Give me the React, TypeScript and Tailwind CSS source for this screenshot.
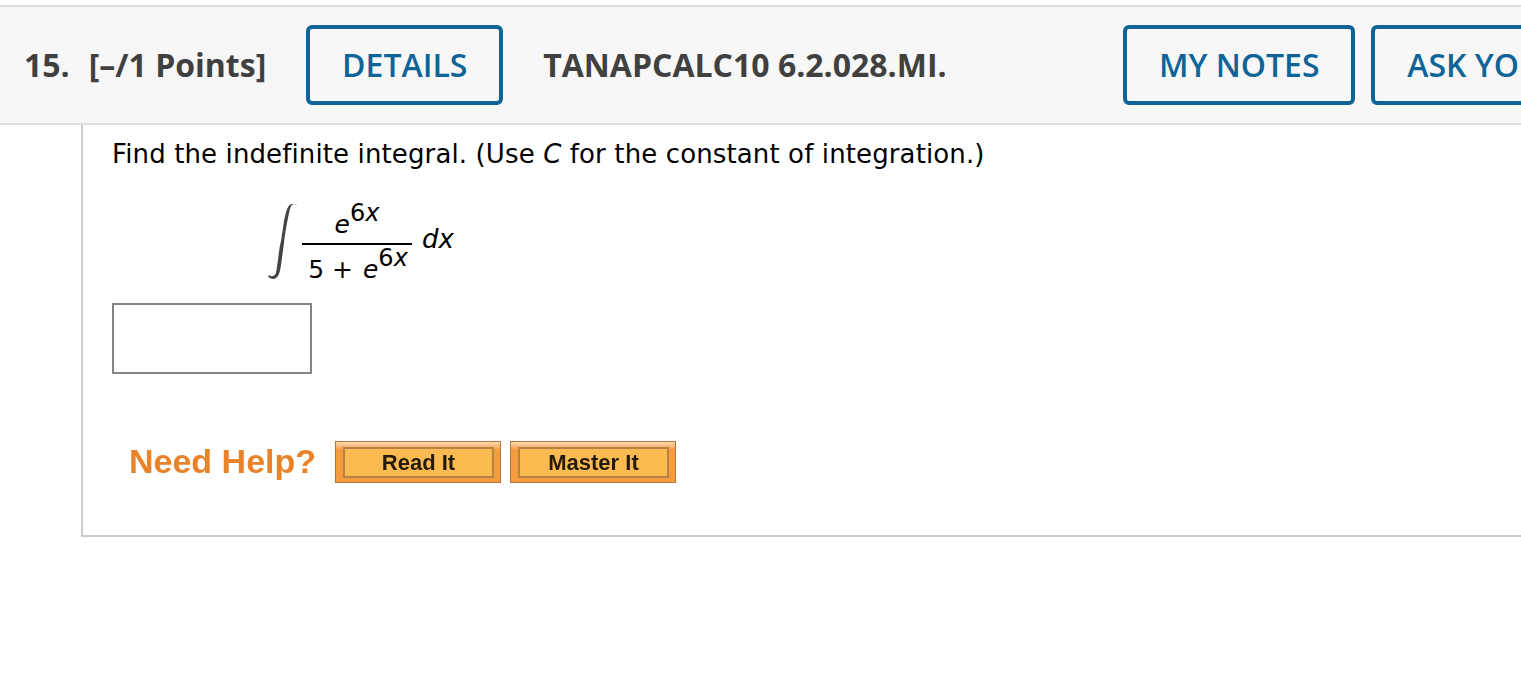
import React from 'react';

const HeaderButton = ({ label, className }: { label: string; className: string }) => (
  <button className={`h-20 shrink-0 rounded-[6px] border-4 border-[#0e6497] bg-transparent text-center text-[32px] font-semibold text-[#0e6497] whitespace-nowrap ${className}`}>
    {label}
  </button>
);

const HelpButton = ({ label, className }: { label: string; className: string }) => (
  <button className={`h-[42px] shrink-0 border border-[#b4743a] bg-gradient-to-b from-[#fbd9b0] via-[#f59c3c] to-[#f59c3c] from-0% via-20% pt-[5px] pr-[6px] pb-[4px] pl-[7px] ${className}`}>
    <span className="flex h-full w-full items-center justify-center border-2 border-[#b98146] bg-[#fcbb50] font-['Liberation_Sans',sans-serif] text-[22px] font-bold text-[#231a0c] blur-[0.4px]">
      {label}
    </span>
  </button>
);

export default function App() {
  return (
    <div className="h-[681px] w-[1521px] overflow-hidden bg-white pt-[5px] font-['DejaVu_Sans',sans-serif]">
      <header className="flex h-[120px] items-center overflow-hidden border-y-2 border-[#dedede] bg-[#f7f7f7] font-['Open_Sans',sans-serif]">
        <span className="ml-[24px] shrink-0 text-[32px] font-bold text-[#404040]">15.</span>
        <span className="ml-[19px] shrink-0 text-[32px] font-bold text-[#404040] whitespace-nowrap">[–/1 Points]</span>
        <HeaderButton label="DETAILS" className="ml-[40px] w-[197px]" />
        <span className="ml-[40px] w-[580px] shrink-0 text-[32px] font-bold text-[#404040] whitespace-nowrap">TANAPCALC10 6.2.028.MI.</span>
        <HeaderButton label="MY NOTES" className="w-[232px]" />
        <HeaderButton label="ASK YO" className="ml-4 w-[320px] text-left indent-[32px]" />
      </header>

      <main className="ml-[81px] h-[412px] border-b-2 border-l-2 border-[#cccccc] pl-[29px]">
        <p className="pt-[9px] text-[26px] leading-[40px] tracking-[0.12px] text-black whitespace-nowrap">
          Find the indefinite integral. (Use <i>C</i> for the constant of integration.)
        </p>

        <div className="mt-[26px] ml-[153px] flex h-[88px] items-center">
          <svg width="36" height="82" viewBox="0 0 36 82" className="shrink-0 text-[#444444]">
            <path
              d="M32 3 C29 0 26 1 25 6 C23 14 20 30 19 40 L16 62 C15 70 13 75 9 76 C6 76 4 75 3 73 L4 72 C6 74 9 74 11 70 C13 60 14 45 16 38 L19 18 C21 8 23 1 27 1 C29 1 31 1 32 3 Z"
              fill="currentColor"
            />
          </svg>
          <div className="ml-[1px] flex w-[110px] shrink-0 flex-col items-center text-[25px] leading-none text-black">
            <div className="flex h-[41px] items-end pb-[6px]">
              <i>e</i>
              <span className="relative -top-[12px] text-[24px]">
                6<i>x</i>
              </span>
            </div>
            <div className="h-[2px] w-full bg-black" />
            <div className="flex h-[41px] items-end pb-[4px] pl-[2px] whitespace-nowrap">
              <span>5 + </span>
              <i className="ml-[10px]">e</i>
              <span className="relative -top-[12px] text-[24px]">
                6<i>x</i>
              </span>
            </div>
          </div>
          <i className="ml-[10px] -mt-[10px] text-[26px] text-black">dx</i>
        </div>

        <input
          aria-label="Answer"
          className="mt-[15px] block h-[71px] w-[200px] border-2 border-[#858585] bg-white"
        />

        <div className="mt-[62px] ml-[17px] flex items-center">
          <span className="w-[186px] shrink-0 font-['Liberation_Sans',sans-serif] text-[34px] font-bold text-[#e8832a] blur-[0.4px] whitespace-nowrap">
            Need Help?
          </span>
          <HelpButton label="Read It" className="ml-5 w-[166px]" />
          <HelpButton label="Master It" className="ml-[9px] w-[166px]" />
        </div>
      </main>
    </div>
  );
}
